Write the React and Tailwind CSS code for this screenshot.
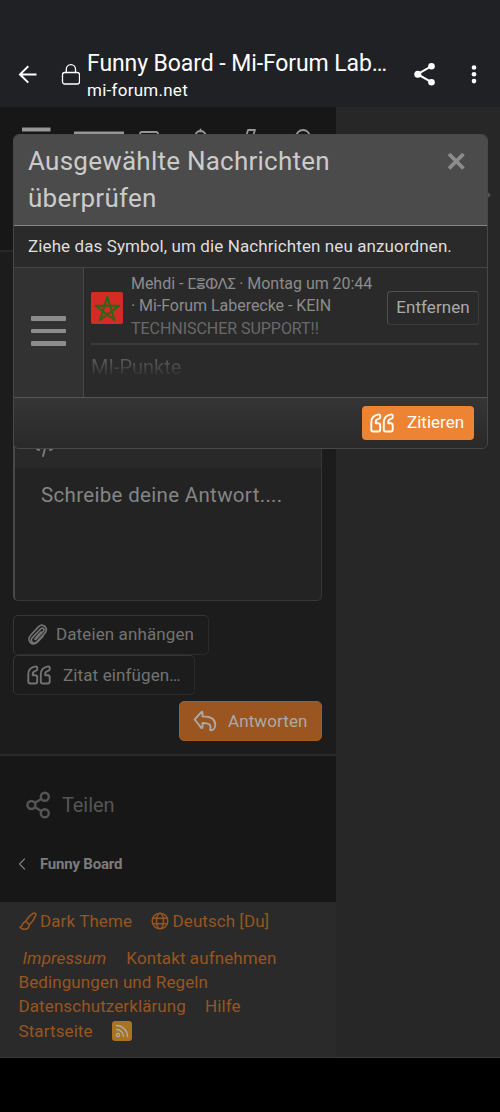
import React from 'react';

const line = { fill: 'none', stroke: 'currentColor', strokeLinecap: 'round', strokeLinejoin: 'round' };

const quoteMark = 'M8.900 1.400C4 2 1.300 5 1.300 9.500v7a2 2 0 0 0 2 2h4.900a2 2 0 0 0 2-2v-4.200a2 2 0 0 0-2-2H5.700V9c0-1.700 1.300-2.900 3.400-3.400.7-.2 1.100-.7 1.100-1.300V2.500c0-.7-.6-1.200-1.300-1.100Z';

function QuoteIcon({ className }) {
  return (
    <svg viewBox="0 0 24 20" className={className} {...line} strokeWidth="1.9">
      <path d={quoteMark} />
      <path d={quoteMark} transform="translate(12.500 0)" />
    </svg>
  );
}

function BrowserBar() {
  return (
    <header className="flex h-[107px] shrink-0 bg-[#202124] pt-[50px] text-white">
      <svg viewBox="0 0 20 20" className="ml-[18px] mt-[14px] h-5 w-5" {...line} strokeLinecap="butt" strokeWidth="2">
        <path d="M18.500 10.400H2M10.300 2.200 2 10.400l8.300 8.200" strokeLinejoin="miter" />
      </svg>
      <svg viewBox="0 0 20 22" className="ml-[22px] mt-[13px] h-[22px] w-5" {...line} strokeWidth="1.300">
        <rect x="2.500" y="9.500" width="17" height="11.500" rx="2.200" />
        <path d="M6.300 9.500V6.200a4.600 4.600 0 0 1 9.200 0v3.300" />
      </svg>
      <div className="ml-[7px] w-[304px] whitespace-nowrap">
        <div className="h-[27px] text-[23px] leading-[27px] tracking-[-0.090px]">Funny Board - Mi-Forum Lab…</div>
        <div className="h-[26px] text-[17px] leading-[26px] tracking-[0.260px]">mi-forum.net</div>
      </div>
      <svg viewBox="0 0 22 24" className="ml-[22px] mt-[12px] h-6 w-[22px]" fill="currentColor">
        <path d="M18.500 4.200 4.500 12.200l14 8" fill="none" stroke="currentColor" strokeWidth="2" />
        <circle cx="18.500" cy="4.200" r="3.300" />
        <circle cx="4.800" cy="12.200" r="3.500" />
        <circle cx="18.500" cy="20.200" r="3.300" />
      </svg>
      <svg viewBox="0 0 8 22" className="ml-[35px] mt-[14px] h-[22px] w-2" fill="currentColor">
        <circle cx="4" cy="3.500" r="2.300" />
        <circle cx="4" cy="10.300" r="2.300" />
        <circle cx="4" cy="17.100" r="2.300" />
      </svg>
    </header>
  );
}

function ForumNav() {
  return (
    <div className="h-[145px] shrink-0 border-b-2 border-[#292929] bg-[#171717] text-[#969696]">
      <svg viewBox="0 0 336 50" className="h-[50px] w-[336px]" {...line} strokeWidth="1.800">
        <rect x="22" y="20.500" width="28.500" height="4" fill="currentColor" stroke="none" />
        <rect x="74" y="24.500" width="50" height="3" fill="currentColor" stroke="none" />
        <rect x="140" y="25" width="18" height="14" rx="2" />
        <path d="M200.500 22.500v2M195 29c1-4 3-5 5.500-5s4.500 1 5.500 5M246 30l2-7h7l-2 6" />
        <circle cx="303" cy="30" r="7" />
      </svg>
    </div>
  );
}

function ReplyForm() {
  return (
    <div className="flex h-[504px] shrink-0 flex-col border-b-2 border-[#292929] bg-[#1c1c1c] pl-[13px] pr-[14px] pt-[148px]">
      <div className="flex h-[201px] w-[309px] shrink-0 flex-col rounded-[5px] border border-l-2 border-[#363636] border-l-[#484848] bg-[#232323]">
        <div className="h-[67px] bg-[#292929] pl-5 pt-[40px] text-[#777]">
          <svg viewBox="0 0 20 18" className="h-[18px] w-5" {...line} strokeWidth="2">
            <path d="M2 8l2 1M8 15l3-11M17 8l-2 1" />
          </svg>
        </div>
        <div className="pl-[26px] pt-[14px] text-[20.500px] leading-[26px] tracking-[0.320px] text-[#858585]">Schreibe deine Antwort....</div>
      </div>
      <div className="mt-[14px] flex h-10 w-[196px] shrink-0 items-center rounded-[5px] border border-[#2b2b2b] border-t-[#363636] border-l-[#363636] text-[17px] text-[#737373]">
        <svg viewBox="0 0 20 22" className="ml-[14px] h-[22px] w-5" {...line} strokeWidth="1.700">
          <path d="m13 8.200-5.700 6.200c-.8.800-.2 1.500.6.800l7.300-7.700c2-2.400-.4-4.600-2.600-2.500l-8.200 8.600c-3.100 3.500 1.200 7.300 4.400 4.200l7.700-8.200c2.600-3 2.100-5.500.4-7.100-1.800-1.600-4.500-1.500-6.500.4l-7.500 8.100c-2.500 2.700-2.300 5.800-.5 7.600 2 1.900 5 1.700 7.200-.6l5.400-5.800" />
        </svg>
        <span className="ml-[8px] whitespace-nowrap tracking-[0.110px]">Dateien anhängen</span>
      </div>
      <div className="flex h-10 w-[182px] shrink-0 items-center rounded-[5px] border border-[#2b2b2b] border-t-[#363636] border-l-[#363636] text-[17px] text-[#737373]">
        <QuoteIcon className="ml-[13px] h-5 w-6" />
        <span className="ml-[12px] whitespace-nowrap pt-px tracking-[0.120px]">Zitat einfügen…</span>
      </div>
      <div className="mt-[6px] flex h-10 w-[143px] shrink-0 items-center self-end rounded-[5px] border border-[#a75b1d] bg-[#9a5520] text-[17px] text-[#aaa]">
        <svg viewBox="0 0 24 22" className="ml-[13px] h-[22px] w-6" {...line} strokeWidth="1.900">
          <path d="M1.700 9.500 8.300 2.200c.6-.7 1.200-.3 1.200.4v3.800c8 0 12.800 2.200 12.800 8.400 0 3-2 5.400-4.300 5.600-.9 0-1-.5-.7-1.300 1.200-4.600-1.700-6.100-7.800-6.100v4.300c0 .8-.8 1-1.300.5Z" />
        </svg>
        <span className="ml-[11px] pt-px tracking-[0.100px]">Antworten</span>
      </div>
    </div>
  );
}

function ShareSection() {
  return (
    <div className="flex h-[147px] shrink-0 flex-col border-b border-[#292929] bg-[#171717]">
      <div className="flex items-center pl-[26px] pt-[34px] text-[#555]">
        <svg viewBox="0 0 24 28" className="h-7 w-6" {...line} strokeWidth="2.400">
          <circle cx="18.800" cy="5.800" r="4" />
          <circle cx="5.400" cy="14" r="4" />
          <circle cx="18.800" cy="22.200" r="4" />
          <path d="m9 11.800 6.200-3.800M9 16.200l6.200 3.800" />
        </svg>
        <span className="ml-[12px] pt-px text-[20px] leading-7 tracking-[-0.100px]">Teilen</span>
      </div>
      <div className="mt-[32px] flex items-center pl-[18px] text-[#7c7c7c]">
        <svg viewBox="0 0 8 14" className="h-[14px] w-2" {...line} strokeWidth="1.200">
          <path d="M6.500 2 1.500 7l5 5" />
        </svg>
        <span className="ml-[14px] text-[15px] leading-[26px] font-bold tracking-[-0.200px]">Funny Board</span>
      </div>
    </div>
  );
}

function ForumFooter() {
  return (
    <footer className="flex-1 bg-[#2a2a2a] pl-[18.500px] pt-[6px] text-[17px] leading-6 text-[#99551f]">
      <div className="flex items-center">
        <svg viewBox="0 0 18 18" className="h-[18px] w-[18px]" {...line} strokeWidth="1.600">
          <path d="M6.500 9.500C9 5.500 12 2.500 14.500 1.200c1.300-.6 2.800.5 2.200 2C15.500 6.500 13.500 9.800 10 13.200c.3 2.500-1.600 4.100-4.500 4.100-2.200 0-3.800-.7-4.600-2.400 2.200.5 2.100-1.300 2.500-2.500.5-1.500 1.600-2 3.100-2.900ZM6.500 9.500c1.700.5 3 1.900 3.500 3.700" />
        </svg>
        <span className="ml-[3.500px] tracking-[0.100px]">Dark Theme</span>
        <svg viewBox="0 0 18 18" className="ml-[19px] h-[18px] w-[18px]" {...line} strokeWidth="1.500">
          <circle cx="9" cy="9" r="7.800" />
          <ellipse cx="9" cy="9" rx="3.500" ry="7.800" />
          <path d="M1.800 6.300h14.400M1.800 11.700h14.400" />
        </svg>
        <span className="ml-[3.500px] tracking-[0.050px]">Deutsch [Du]</span>
      </div>
      <div className="mt-[13px] flex flex-col whitespace-nowrap leading-[24.200px] tracking-[0.100px]">
        <div className="flex pl-1"><span className="italic">Impressum</span><span className="ml-5">Kontakt aufnehmen</span></div>
        <div>Bedingungen und Regeln</div>
        <div className="flex"><span>Datenschutzerklärung</span><span className="ml-[19px]">Hilfe</span></div>
        <div className="flex items-center">
          <span>Startseite</span>
          <span className="ml-[19px] flex h-5 w-5 items-center justify-center rounded-[3px] bg-[#a8741f] text-[#aaa]">
            <svg viewBox="0 0 14 14" className="h-[14px] w-[14px]" {...line} strokeWidth="1.400">
              <circle cx="3" cy="11" r="1.600" />
              <path d="M1.500 5.500a7 7 0 0 1 7 7M1.500 1.500a11 11 0 0 1 11 11" />
            </svg>
          </span>
        </div>
      </div>
    </footer>
  );
}

function QuoteDialog() {
  return (
    <section className="absolute left-[13px] top-[134px] flex h-[315px] w-[475px] flex-col overflow-hidden rounded-[6px] border border-[#484848] bg-[#2a2a2a]">
      <div className="flex h-[91px] shrink-0 justify-between border-b border-[#858585] bg-[#4b4b4b] pl-[14px] pt-[8px]">
        <h2 className="w-[330px] text-[26px] leading-[37px] tracking-[0.240px] text-[#cbcbcb]">Ausgewählte Nachrichten überprüfen</h2>
        <svg viewBox="0 0 20 20" className="mr-[21px] mt-[8px] h-5 w-5 text-[#8c8c8c]" {...line} strokeLinecap="butt" strokeWidth="3.800">
          <path d="M3 3 17.500 17.500M17.500 3l-14.500 14.500" />
        </svg>
      </div>
      <p className="h-[41px] shrink-0 pl-[14px] text-[17px] leading-[41px] tracking-[0.100px] text-[#dedede]">Ziehe das Symbol, um die Nachrichten neu anzuordnen.</p>
      <div className="flex h-[131px] shrink-0 border-y border-t-[#444] border-b-[#555]">
        <div className="flex w-[70px] shrink-0 flex-col items-center justify-center gap-[8px] border-r border-[#484848] bg-[#323232] pb-[3px]">
          <i className="h-[4.500px] w-[35px] rounded-[1px] bg-[#8c8c8c]" />
          <i className="h-[4.500px] w-[35px] rounded-[1px] bg-[#8c8c8c]" />
          <i className="h-[4.500px] w-[35px] rounded-[1px] bg-[#8c8c8c]" />
        </div>
        <div className="flex-1 pl-[7px] pr-[8px]">
          <div className="flex h-[77px] items-center border-b-2 border-[#3b3b3b] pt-[4px]">
            <svg viewBox="0 0 32 32" className="h-8 w-8 shrink-0 rounded-[2px] bg-[#d42b25]" fill="none" stroke="#286619" strokeWidth="2" strokeLinejoin="round">
              <path d="M16.300 5 23.500 28 4.500 13.800h23.700L9 28Z" />
            </svg>
            <div className="ml-[8px] h-[70px] w-[256px] whitespace-nowrap text-[16px] leading-[22.500px] tracking-[-0.040px] text-[#8c8c8c]">
              <div>Mehdi - <span className="font-[DejaVu_Sans] text-[15px] leading-none tracking-[-0.900px]">ⵎⴻⵀⴷⵉ</span> · Montag um 20:44</div>
              <div>· Mi-Forum Laberecke - KEIN</div>
              <div className="text-[#696969]">TECHNISCHER SUPPORT!!</div>
            </div>
            <button className="h-[34px] w-[92px] shrink-0 rounded-[4px] border border-[#3c3c3c] border-t-[#505050] border-l-[#505050] text-[17px] text-[#aaa] tracking-[0.050px]">Entfernen</button>
          </div>
          <div className="bg-linear-to-b from-[#5c5c5c] from-40% to-[#303030] to-90% bg-clip-text pt-[9px] text-[20px] leading-[26px] text-transparent">MI-Punkte</div>
        </div>
      </div>
      <div className="flex flex-1 items-center justify-end bg-linear-to-b from-[#353535] to-[#292929] pr-[13px]">
        <button className="flex h-[34px] w-[112px] items-center rounded-[4px] bg-[#ed8433] text-[17px] text-white">
          <QuoteIcon className="ml-[8px] h-5 w-6" />
          <span className="ml-[13px]">Zitieren</span>
        </button>
      </div>
    </section>
  );
}

export default function App() {
  return (
    <div className="relative flex h-[1112px] w-[500px] flex-col overflow-hidden bg-black font-[Roboto,'Noto_Sans',sans-serif]">
      <BrowserBar />
      <main className="flex h-[951px] shrink-0 border-b border-[#3a3a3a] bg-[#272727]">
        <div className="flex w-[336px] flex-col">
          <ForumNav />
          <ReplyForm />
          <ShareSection />
          <ForumFooter />
        </div>
        <span className="ml-[150px] mt-[86px] h-[4px] w-[4px] rotate-45 bg-[#555]" />
      </main>
      <QuoteDialog />
    </div>
  );
}
